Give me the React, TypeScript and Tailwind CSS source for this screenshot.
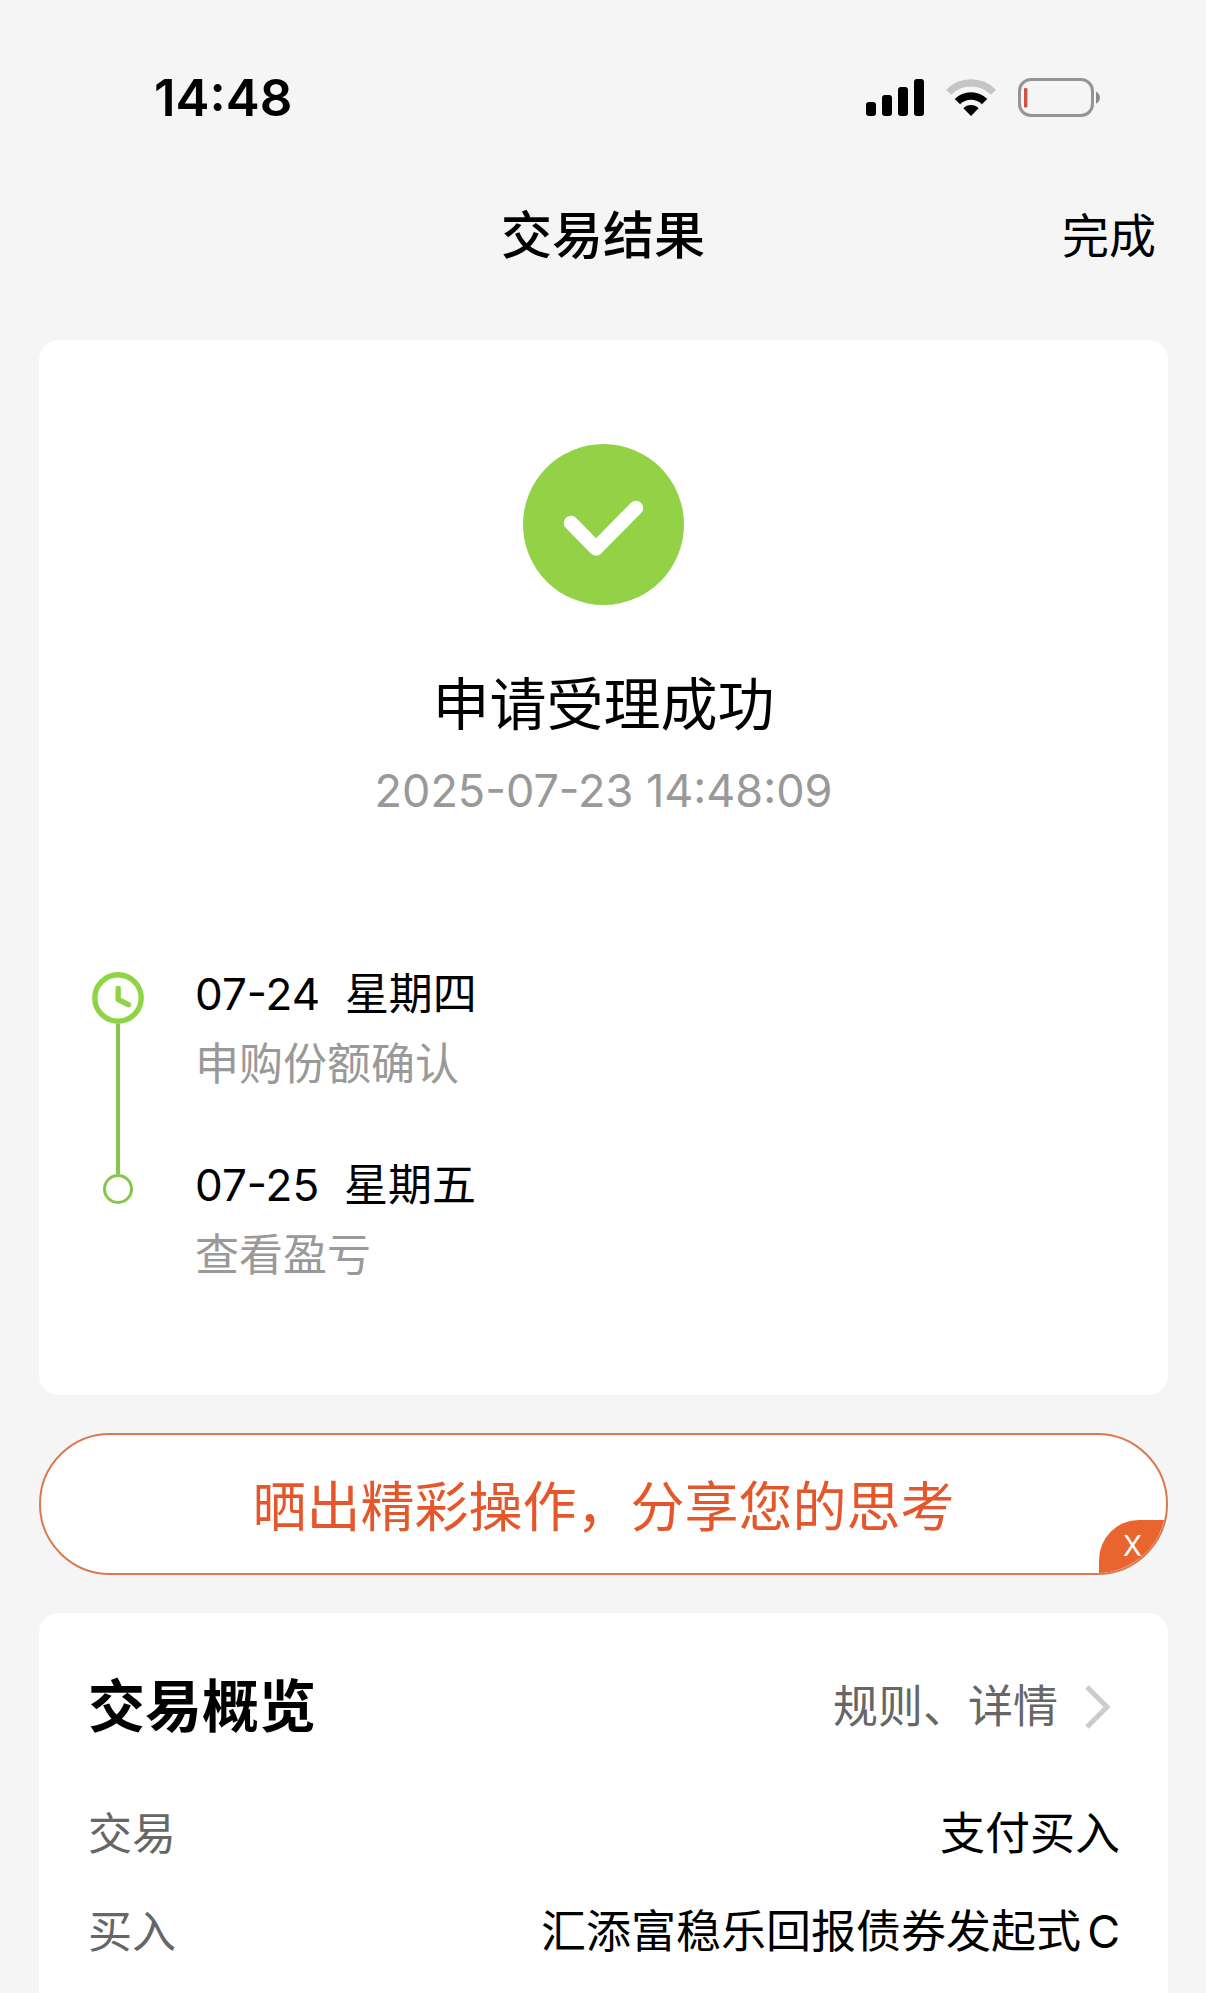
interface TimelineStep {
  date: string;
  weekday: string;
  label: string;
}

const steps: TimelineStep[] = [
  { date: '07-24', weekday: '星期四', label: '申购份额确认' },
  { date: '07-25', weekday: '星期五', label: '查看盈亏' },
];

const overview = [
  { name: '交易', value: '支付买入' },
  { name: '买入', value: '汇添富稳乐回报债券发起式', suffix: 'C' },
];

function SignalIcon() {
  return (
    <svg width="58" height="38" viewBox="0 0 58 38" fill="#000">
      <rect x="0" y="23" width="10" height="14" rx="3" />
      <rect x="16" y="16" width="10" height="21" rx="3" />
      <rect x="32" y="8" width="10" height="29" rx="3" />
      <rect x="48" y="0" width="10" height="37" rx="3" />
    </svg>
  );
}

function WifiIcon() {
  return (
    <svg width="50" height="38" viewBox="0 0 50 38" fill="none">
      <path d="M2.6 13.2a31.5 31.5 0 0 1 44.8 0" stroke="#c5c5c5" strokeWidth="7.2" />
      <path d="M11.4 22.6a19.2 19.2 0 0 1 27.2 0" stroke="#000" strokeWidth="7.6" />
      <path d="M25 37l-7.6-7.8a10.8 10.8 0 0 1 15.2 0z" fill="#000" />
    </svg>
  );
}

function BatteryIcon() {
  return (
    <svg width="83" height="40" viewBox="0 0 83 40" fill="none">
      <rect x="1.5" y="1.5" width="73" height="36" rx="11.5" stroke="#949494" strokeWidth="3" />
      <rect x="6" y="10" width="3.4" height="19.4" rx="1.2" fill="#d2503f" />
      <path d="M78 13.4c5.3 2.6 5.3 9.8 0 12.4z" fill="#8a8a8a" />
    </svg>
  );
}

function ClockIcon() {
  return (
    <svg className="shrink-0" width="52" height="52" viewBox="0 0 52 52" fill="none" stroke="#8fd445">
      <circle cx="26" cy="26" r="23.2" strokeWidth="5.4" />
      <path d="M26.2 16.5v11l10.2 5.2" strokeWidth="5.4" strokeLinecap="round" strokeLinejoin="round" />
    </svg>
  );
}

function StatusBar() {
  return (
    <div className="flex h-32 items-end justify-between pr-[105px] pl-[154px]">
      <span className="text-[51px] leading-[60px] font-semibold">14:48</span>
      <div className="flex h-[60px] items-center gap-[22px]">
        <SignalIcon />
        <WifiIcon />
        <BatteryIcon />
      </div>
    </div>
  );
}

function NavBar() {
  return (
    <header className="grid h-[212px] grid-cols-3 items-center px-[50px] pt-1">
      <h1 className="col-start-2 text-center text-[51px] leading-[60px] font-medium">交易结果</h1>
      <button type="button" className="justify-self-end text-[47px] leading-[60px]">
        完成
      </button>
    </header>
  );
}

function ResultCard() {
  return (
    <section className="rounded-[20px] bg-white pt-[104px] pb-[110px]">
      <div className="flex flex-col items-center">
        <svg width="161" height="161" viewBox="0 0 161 161" fill="none">
          <circle cx="80.5" cy="80.5" r="80.5" fill="#93d247" />
          <path
            d="M48 79l25 25.5L113 64"
            stroke="#fff"
            strokeWidth="14.5"
            strokeLinecap="round"
            strokeLinejoin="round"
          />
        </svg>
        <h2 className="mt-[60px] text-[57px] leading-[80px]">申请受理成功</h2>
        <time className="mt-4 text-[45px] leading-[60px] text-[#999]">2025-07-23 14:48:09</time>
      </div>

      <ol className="mt-[142px] px-[52px]">
        {steps.map((step, i) => (
          <li key={step.date} className="flex gap-[51px]">
            <div className="flex w-[53px] flex-col items-center">
              {i === 0 ? (
                <>
                  <div className="h-[9px]" />
                  <ClockIcon />
                  <div className="w-1 flex-1 bg-[#84c74d]" />
                </>
              ) : (
                <>
                  <div className="h-5 w-1 bg-[#84c74d]" />
                  <div className="size-[30px] rounded-full border-[3px] border-[#84c74d]" />
                </>
              )}
            </div>
            <div className={i < steps.length - 1 ? 'pt-px pb-[60px]' : 'pt-px'}>
              <p className="text-[44px] leading-[60px] whitespace-pre">
                {step.date}  {step.weekday}
              </p>
              <p className="mt-[10px] text-[44px] leading-[60px] text-[#999]">{step.label}</p>
            </div>
          </li>
        ))}
      </ol>
    </section>
  );
}

function ShareBanner() {
  return (
    <div className="relative mt-[38px] overflow-hidden rounded-full border-2 border-[#d97a52] bg-white">
      <button
        type="button"
        className="block w-full pt-[33px] pb-[25px] text-[54px] leading-[80px] text-[#e5572b]"
      >
        晒出精彩操作，分享您的思考
      </button>
      <button
        type="button"
        aria-label="关闭"
        className="absolute right-0 bottom-0 h-[53px] w-[67px] rounded-tl-[40px] bg-[#e86530] text-[28px] leading-[53px] text-white"
      >
        X
      </button>
    </div>
  );
}

function OverviewCard() {
  return (
    <section className="mt-[38px] flex-1 rounded-t-[20px] bg-white pt-[54px] pr-12 pl-[49px]">
      <div className="flex items-center justify-between">
        <h2 className="text-[57px] leading-[80px] font-bold">交易概览</h2>
        <a href="#rules" className="flex items-center gap-6 text-[45px] leading-[60px] text-[#666]">
          规则、详情
          <svg width="38" height="46" viewBox="0 0 38 46" fill="none">
            <path d="M5 3l20 20L5 43" stroke="#ccc" strokeWidth="5" />
          </svg>
        </a>
      </div>
      <dl className="mt-[57px] flex flex-col gap-[38px] leading-[60px]">
        {overview.map((row) => (
          <div key={row.name} className="flex justify-between">
            <dt className="text-[44px] text-[#666]">{row.name}</dt>
            <dd className="flex gap-1.5 text-[45px]">
              {row.value}
              {row.suffix && <span>{row.suffix}</span>}
            </dd>
          </div>
        ))}
      </dl>
    </section>
  );
}

export default function App() {
  return (
    <main
      lang="zh-CN"
      className="flex min-h-screen flex-col bg-[#f5f5f5] font-['Inter','Noto_Sans_CJK_SC',sans-serif] text-black"
    >
      <StatusBar />
      <NavBar />
      <div className="flex flex-1 flex-col pr-[38px] pl-[39px]">
        <ResultCard />
        <ShareBanner />
        <OverviewCard />
      </div>
    </main>
  );
}
